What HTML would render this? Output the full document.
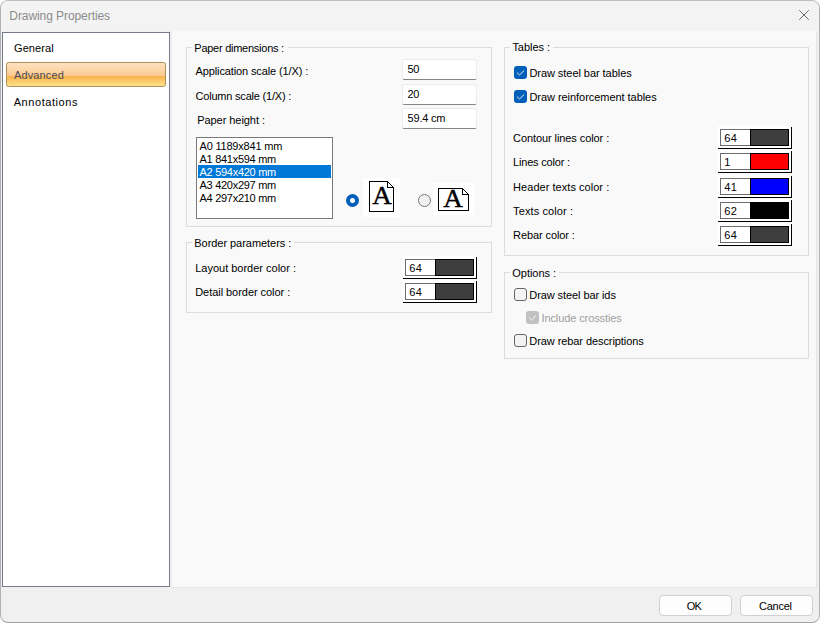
<!DOCTYPE html>
<html><head><meta charset="utf-8"><title>Drawing Properties</title>
<style>
html,body{margin:0;padding:0;}
body{width:820px;height:623px;overflow:hidden;background:#fff;font-family:"Liberation Sans", sans-serif;position:relative;}
.win{position:absolute;left:0;top:0;width:818px;height:621px;border:1px solid #b2b2b2;border-top-color:#bdbdbd;border-bottom-color:#a4a4a4;border-radius:8px;background:#f0f0f0;overflow:hidden;}
.title{position:absolute;left:0;top:0;width:818px;height:30px;background:#f3f3f3;}
.side{position:absolute;left:1px;top:31px;width:166px;height:553px;border:1px solid #747c8b;background:#fff;}
.hl{position:absolute;left:5px;top:61px;width:158px;height:23px;border:1px solid #ad8e5c;border-radius:2.5px;background:linear-gradient(#fde2c0 0%,#fcd6a8 30%,#fbc98f 55%,#f8b24c 57%,#fbc865 75%,#fde08c 100%);}
.panel{position:absolute;left:170px;top:30px;width:644px;height:555px;border:1px solid #f9f9f9;border-left-color:#ececec;border-right-color:#e5e5e5;border-bottom-color:#e6e6e6;background:#f9f9f9;}
.t{position:absolute;white-space:nowrap;}
.gb{position:absolute;box-sizing:border-box;border:1px solid #dcdcdc;}
.gap{position:absolute;height:1px;background:#f9f9f9;}
.inp{position:absolute;box-sizing:border-box;width:75px;height:21px;background:#fff;border:1px solid #ececec;border-bottom:1px solid #868686;border-radius:2.5px;}
.lb{position:absolute;box-sizing:border-box;border:1px solid #7a7a7a;background:#fff;}
.sel{position:absolute;background:#0078d7;}
.rd{position:absolute;box-sizing:border-box;width:13px;height:13px;border-radius:50%;}
.rd.on{border:4px solid #005fb8;background:#fff;}
.rd.off{border:1px solid #7a7a7a;background:#f0f0f0;}
.ab{position:absolute;}
.cb{position:absolute;box-sizing:border-box;width:74px;height:23px;background:#fff;border-bottom:1px solid #000;}
.cb::after{content:'';position:absolute;right:0;top:1px;width:1px;height:22px;background:#000;}
.cbw{position:absolute;box-sizing:border-box;left:2px;top:3px;width:31px;height:17px;border:1px solid #6d6d6d;border-right:none;background:#fff;}
.cbs{position:absolute;box-sizing:border-box;left:32px;top:3px;width:39px;height:17px;border:1px solid #000;}
.ck{position:absolute;box-sizing:border-box;width:13px;height:13px;border-radius:3px;}
.ck svg{position:absolute;left:0;top:0;}
.ck.on{background:#005fb8;}
.ck.dis{background:#c1c1c1;}
.ck.off{border:1px solid #666;background:#f3f3f3;}
.btn{position:absolute;box-sizing:border-box;width:73px;height:21px;border:1px solid #d0d0d0;border-radius:4px;background:#fdfdfd;}
.x{position:absolute;left:798px;top:9px;}
</style></head><body>
<div class="win">
<div class="title"></div>
<svg class="x" width="10" height="10" viewBox="0 0 10 10"><path d="M0.2 0.2 L9.8 9.8 M9.8 0.2 L0.2 9.8" stroke="#5c5c5c" stroke-width="0.9" fill="none"/></svg>
<div class="side"></div>
<div class="hl"></div>
<div class="panel"></div>
<div style="position:absolute;left:-1px;top:-1px;width:820px;height:623px">
<div class="gb" style="left:186px;top:47px;width:306px;height:180px"></div><div class="gap" style="left:192px;top:47px;width:96px"></div>
<div class="gb" style="left:186px;top:242px;width:306px;height:71px"></div><div class="gap" style="left:192px;top:242px;width:102px"></div>
<div class="gb" style="left:504px;top:47px;width:305px;height:209px"></div><div class="gap" style="left:510px;top:47px;width:43px"></div>
<div class="gb" style="left:504px;top:272px;width:305px;height:87px"></div><div class="gap" style="left:510px;top:272px;width:49px"></div>
<div class="inp" style="left:402px;top:59px"></div>
<div class="inp" style="left:402px;top:84px"></div>
<div class="inp" style="left:402px;top:108px"></div>
<div class="lb" style="left:196px;top:137px;width:137px;height:82px"><div class="sel" style="left:1px;top:27px;width:133px;height:13px"></div></div>
<div class="rd on" style="left:346px;top:194px"></div>
<div class="rd off" style="left:418px;top:194px"></div>
<svg class="ab" style="left:363px;top:178px" width="37" height="39" viewBox="0 0 37 39"><rect width="37" height="39" fill="#fff"/><path d="M6.5 3.5 H24.5 L30.5 9.5 V33.5 H6.5 Z" fill="#fff" stroke="#000" stroke-width="1" stroke-linejoin="miter" shape-rendering="crispEdges"/><path d="M24.5 3.5 V9.5 H30.5" fill="none" stroke="#000" stroke-width="1" stroke-linejoin="miter" shape-rendering="crispEdges"/><text x="19" y="26" font-family="Liberation Serif, serif" font-size="24.7" text-anchor="middle" textLength="19.6" lengthAdjust="spacingAndGlyphs" fill="#000" stroke="#000" stroke-width="0.4">A</text></svg>
<svg class="ab" style="left:433px;top:183px" width="41" height="32" viewBox="0 0 41 32"><rect width="41" height="32" fill="#fff"/><path d="M5.5 5.5 H29.5 L35.5 11.5 V27.5 H5.5 Z" fill="#fff" stroke="#000" stroke-width="1" stroke-linejoin="miter" shape-rendering="crispEdges"/><path d="M29.5 5.5 V11.5 H35.5" fill="none" stroke="#000" stroke-width="1" stroke-linejoin="miter" shape-rendering="crispEdges"/><text x="20" y="24" font-family="Liberation Serif, serif" font-size="24.7" text-anchor="middle" textLength="19.6" lengthAdjust="spacingAndGlyphs" fill="#000" stroke="#000" stroke-width="0.4">A</text></svg>
<div class="cb" style="left:403px;top:256px"><div class="cbw"></div><div class="cbs" style="background:#3e3e3e"></div></div>
<div class="cb" style="left:403px;top:280px"><div class="cbw"></div><div class="cbs" style="background:#3e3e3e"></div></div>
<div class="cb" style="left:718px;top:126px"><div class="cbw"></div><div class="cbs" style="background:#3e3e3e"></div></div>
<div class="cb" style="left:718px;top:150px"><div class="cbw"></div><div class="cbs" style="background:#ff0000"></div></div>
<div class="cb" style="left:718px;top:175px"><div class="cbw"></div><div class="cbs" style="background:#0000ff"></div></div>
<div class="cb" style="left:718px;top:199px"><div class="cbw"></div><div class="cbs" style="background:#000000"></div></div>
<div class="cb" style="left:718px;top:223px"><div class="cbw"></div><div class="cbs" style="background:#3e3e3e"></div></div>
<div class="ck on" style="left:514px;top:66px"><svg width="13" height="13" viewBox="0 0 13 13"><path d="M3.2 6.8 L5.5 9 L9.8 4.8" fill="none" stroke="#fff" stroke-opacity="0.92" stroke-width="0.95" stroke-linecap="round" stroke-linejoin="round"/></svg></div>
<div class="ck on" style="left:514px;top:90px"><svg width="13" height="13" viewBox="0 0 13 13"><path d="M3.2 6.8 L5.5 9 L9.8 4.8" fill="none" stroke="#fff" stroke-opacity="0.92" stroke-width="0.95" stroke-linecap="round" stroke-linejoin="round"/></svg></div>
<div class="ck off" style="left:514px;top:288px"></div>
<div class="ck dis" style="left:526px;top:311px"><svg width="13" height="13" viewBox="0 0 13 13"><path d="M3.2 6.8 L5.5 9 L9.8 4.8" fill="none" stroke="#fff" stroke-opacity="0.92" stroke-width="0.95" stroke-linecap="round" stroke-linejoin="round"/></svg></div>
<div class="ck off" style="left:514px;top:334px"></div>
<div class="btn" style="left:659px;top:595px"></div><div class="btn" style="left:740px;top:595px"></div>
<div class="t" style="left:9.3px;top:9px;font-size:12px;line-height:14px;color:#8b8b8b;letter-spacing:-0.073px;">Drawing Properties</div>
<div class="t" style="left:14.0px;top:42px;font-size:11px;line-height:13px;color:#000;letter-spacing:0.077px;">General</div>
<div class="t" style="left:14.0px;top:69px;font-size:11px;line-height:13px;color:#4a4a55;letter-spacing:0.123px;">Advanced</div>
<div class="t" style="left:13.7px;top:96px;font-size:11px;line-height:13px;color:#000;letter-spacing:0.569px;">Annotations</div>
<div class="t" style="left:194.3px;top:42px;font-size:11px;line-height:13px;color:#000;letter-spacing:-0.257px;">Paper dimensions :</div>
<div class="t" style="left:195.6px;top:65px;font-size:11px;line-height:13px;color:#000;letter-spacing:-0.123px;">Application scale (1/X) :</div>
<div class="t" style="left:195.5px;top:90px;font-size:11px;line-height:13px;color:#000;letter-spacing:-0.203px;">Column scale (1/X) :</div>
<div class="t" style="left:197.2px;top:114px;font-size:11px;line-height:13px;color:#000;letter-spacing:-0.054px;">Paper height :</div>
<div class="t" style="left:407.6px;top:63px;font-size:11px;line-height:13px;color:#000;letter-spacing:-0.450px;">50</div>
<div class="t" style="left:407.6px;top:88px;font-size:11px;line-height:13px;color:#000;letter-spacing:-0.450px;">20</div>
<div class="t" style="left:407.6px;top:112px;font-size:11px;line-height:13px;color:#000;letter-spacing:-0.223px;">59.4 cm</div>
<div class="t" style="left:199.5px;top:140px;font-size:11px;line-height:13px;color:#000;letter-spacing:-0.200px;">A0 1189x841 mm</div>
<div class="t" style="left:199.5px;top:153px;font-size:11px;line-height:13px;color:#000;letter-spacing:-0.276px;">A1 841x594 mm</div>
<div class="t" style="left:199.5px;top:166px;font-size:11px;line-height:13px;color:#fff;letter-spacing:-0.276px;">A2 594x420 mm</div>
<div class="t" style="left:199.5px;top:179px;font-size:11px;line-height:13px;color:#000;letter-spacing:-0.276px;">A3 420x297 mm</div>
<div class="t" style="left:199.5px;top:192px;font-size:11px;line-height:13px;color:#000;letter-spacing:-0.276px;">A4 297x210 mm</div>
<div class="t" style="left:194.3px;top:237px;font-size:11px;line-height:13px;color:#000;letter-spacing:-0.046px;">Border parameters :</div>
<div class="t" style="left:195.2px;top:262px;font-size:11px;line-height:13px;color:#000;letter-spacing:-0.005px;">Layout border color :</div>
<div class="t" style="left:195.2px;top:286px;font-size:11px;line-height:13px;color:#000;letter-spacing:-0.045px;">Detail border color :</div>
<div class="t" style="left:409.3px;top:262px;font-size:11px;line-height:13px;color:#000;letter-spacing:0.450px;">64</div>
<div class="t" style="left:409.3px;top:286px;font-size:11px;line-height:13px;color:#000;letter-spacing:0.450px;">64</div>
<div class="t" style="left:512.4px;top:41px;font-size:11px;line-height:13px;color:#000;letter-spacing:-0.017px;">Tables :</div>
<div class="t" style="left:529.4px;top:67px;font-size:11px;line-height:13px;color:#000;letter-spacing:-0.051px;">Draw steel bar tables</div>
<div class="t" style="left:529.4px;top:91px;font-size:11px;line-height:13px;color:#000;letter-spacing:-0.045px;">Draw reinforcement tables</div>
<div class="t" style="left:513.1px;top:132px;font-size:11px;line-height:13px;color:#000;letter-spacing:-0.086px;">Contour lines color :</div>
<div class="t" style="left:513.1px;top:156px;font-size:11px;line-height:13px;color:#000;letter-spacing:-0.193px;">Lines color :</div>
<div class="t" style="left:513.1px;top:181px;font-size:11px;line-height:13px;color:#000;letter-spacing:0.038px;">Header texts color :</div>
<div class="t" style="left:513.1px;top:205px;font-size:11px;line-height:13px;color:#000;letter-spacing:0.109px;">Texts color :</div>
<div class="t" style="left:513.1px;top:229px;font-size:11px;line-height:13px;color:#000;letter-spacing:-0.099px;">Rebar color :</div>
<div class="t" style="left:724.3px;top:132px;font-size:11px;line-height:13px;color:#000;letter-spacing:0.450px;">64</div>
<div class="t" style="left:724.3px;top:156px;font-size:11px;line-height:13px;color:#000;letter-spacing:0.000px;">1</div>
<div class="t" style="left:724.3px;top:181px;font-size:11px;line-height:13px;color:#000;letter-spacing:0.450px;">41</div>
<div class="t" style="left:724.3px;top:205px;font-size:11px;line-height:13px;color:#000;letter-spacing:0.450px;">62</div>
<div class="t" style="left:724.3px;top:229px;font-size:11px;line-height:13px;color:#000;letter-spacing:0.450px;">64</div>
<div class="t" style="left:512.3px;top:267px;font-size:11px;line-height:13px;color:#000;letter-spacing:-0.029px;">Options :</div>
<div class="t" style="left:529.3px;top:289px;font-size:11px;line-height:13px;color:#000;letter-spacing:-0.085px;">Draw steel bar ids</div>
<div class="t" style="left:541.5px;top:312px;font-size:11px;line-height:13px;color:#a0a0a0;letter-spacing:-0.102px;">Include crossties</div>
<div class="t" style="left:529.3px;top:335px;font-size:11px;line-height:13px;color:#000;letter-spacing:-0.075px;">Draw rebar descriptions</div>
<div class="t" style="left:686.8px;top:600px;font-size:11px;line-height:13px;color:#000;letter-spacing:-0.906px;">OK</div>
<div class="t" style="left:759.0px;top:600px;font-size:11px;line-height:13px;color:#000;letter-spacing:-0.250px;">Cancel</div>
</div>
</div>
</body></html>
